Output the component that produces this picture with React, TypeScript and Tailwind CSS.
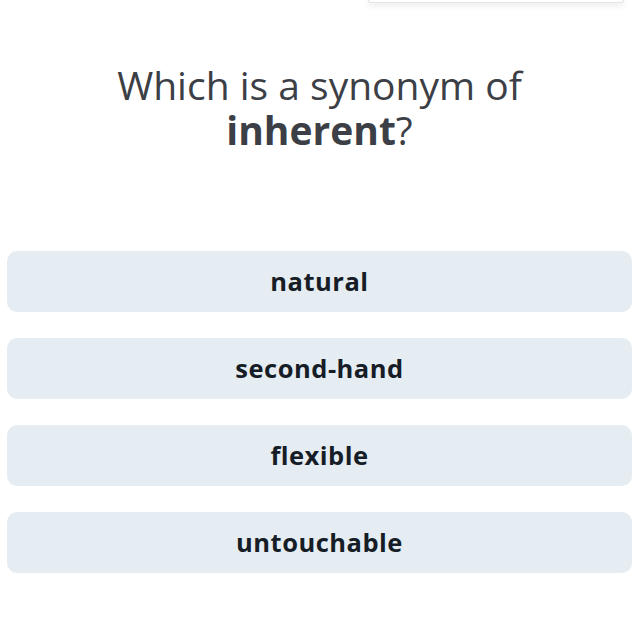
const options = ['natural', 'second-hand', 'flexible', 'untouchable']

export default function App() {
    return (
        <div className="min-h-[640px] bg-white font-['Open_Sans',sans-serif]">
            <div className="flex justify-end pr-[15px]">
                <div className="w-[256px] h-[3px] rounded-b-[14px] border border-t-0 border-[#e4e4e4] bg-white shadow-[0_2px_6px_rgba(0,0,0,0.14)]" />
            </div>

            <h1 className="mt-[59px] text-center text-[39px] leading-[45px] text-[#3c4046]">
                Which is a synonym of
                <br />
                <span className="font-bold">inherent</span>?
            </h1>

            <div className="mt-[99px] px-[7px] flex flex-col gap-[26px]">
                {options.map((opt) => (
                    <button
                        key={opt}
                        className="h-[61px] w-full rounded-[10px] bg-[#e5edf2] text-[25.5px] font-bold tracking-[0.5px] text-[#161d27]"
                    >
                        {opt}
                    </button>
                ))}
            </div>
        </div>
    )
}
